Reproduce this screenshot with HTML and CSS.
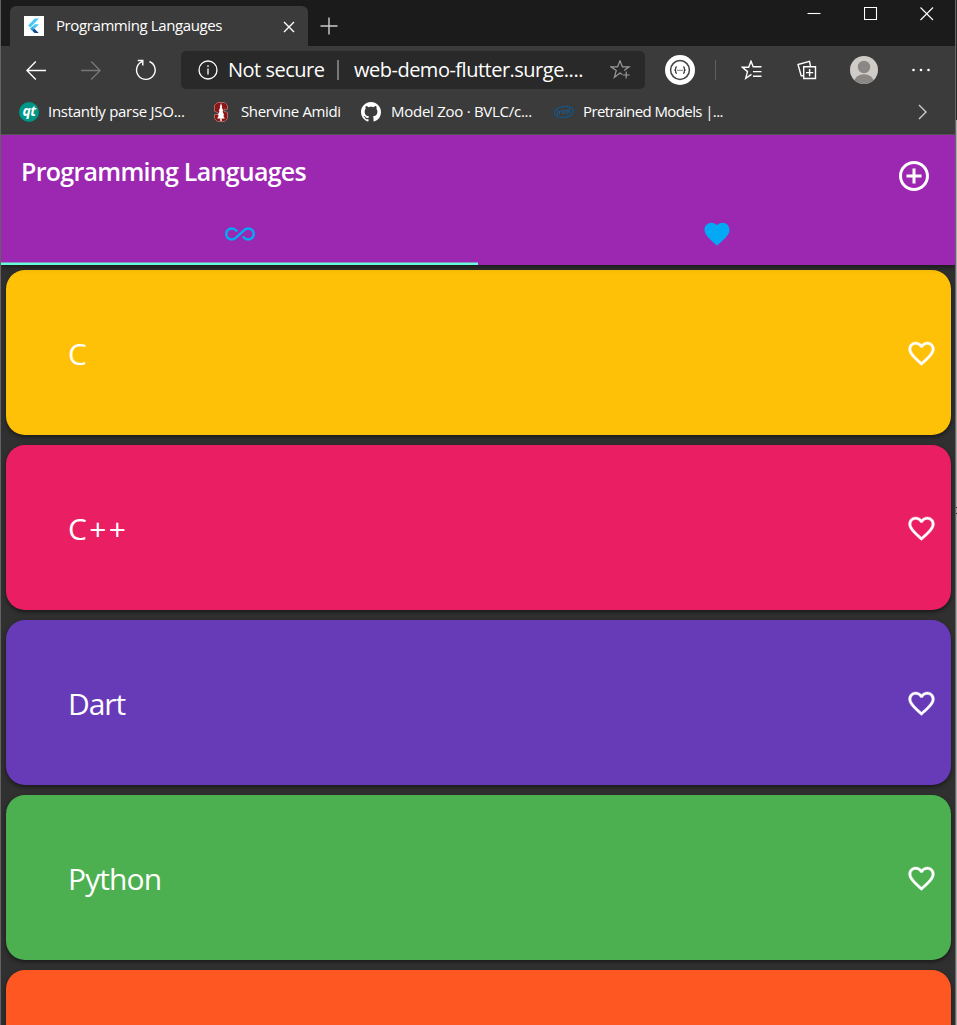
FILE: index.html
```html
<!DOCTYPE html>
<html lang="en">
<head>
<meta charset="utf-8">
<title>Programming Langauges</title>
<link rel="stylesheet" href="styles.css">
</head>
<body>
<svg class="defs" width="0" height="0">
  <symbol id="heart-outline" viewBox="0 0 24 24"><path d="M16.5 3c-1.74 0-3.41.81-4.5 2.09C10.91 3.81 9.24 3 7.5 3 4.42 3 2 5.42 2 8.5c0 3.78 3.4 6.86 8.55 11.54L12 21.35l1.45-1.32C18.6 15.36 22 12.28 22 8.5 22 5.42 19.58 3 16.5 3zm-4.4 15.55l-.1.1-.1-.1C7.14 14.24 4 11.39 4 8.5 4 6.5 5.5 5 7.5 5c1.54 0 3.04.99 3.57 2.36h1.87C13.46 5.99 14.96 5 16.5 5c2 0 3.5 1.5 3.5 3.5 0 2.89-3.14 5.74-7.9 10.05z"/></symbol>
</svg>
<div class="window">
  <div class="titlebar">
    <div class="tab">
      <svg class="favicon" width="20" height="20" viewBox="0 0 20 20"><path fill="#fff" d="M0 0h20v20H0z"/><path fill="#45c8f8" d="M10.800 2.500h4.200L6.200 11.500 4.100 9.400zM10.800 8.200h4.200l-4.500 4.500-2.200-2.100z"/><path fill="#2b9fe0" d="M8.300 10.600l2.100 2.100-2.100 2.200-2.200-2.200z"/><path fill="#0b4a94" d="M8.300 14.800l2.100-2.100 4.400 4.300h-4.200z"/></svg>
      <span class="tab-title">Programming Langauges</span>
      <svg class="tab-close" width="12" height="12" viewBox="0 0 12 12"><path d="M1 1l10 10M11 1L1 11"/></svg>
    </div>
    <svg class="new-tab" width="18" height="18" viewBox="0 0 18 18"><path d="M9 .5v17M.5 9h17"/></svg>
    <div class="controls">
      <svg width="14" height="14" viewBox="0 0 14 14"><path d="M.5 6.500h13"/></svg>
      <svg width="14" height="14" viewBox="0 0 14 14"><path d="M.5 .5h12v12H.5z"/></svg>
      <svg width="14" height="14" viewBox="0 0 14 14"><path d="M.5.5l12.500 12.500M13 .5L.5 13"/></svg>
    </div>
  </div>

  <div class="toolbar">
    <svg class="back" width="20" height="19" viewBox="0 0 20 19"><path d="M20 9.500H1M9.800.6L.9 9.500l8.900 8.900"/></svg>
    <svg class="forward" width="20" height="19" viewBox="0 0 20 19"><path d="M0 9.500h19M10.200.6l8.900 8.900-8.900 8.900"/></svg>
    <svg class="reload" width="22" height="22" viewBox="0 0 22 22"><path d="M14.500 2.500A9.300 9.300 0 1 1 7 2.600M2.800 1.500h5v5"/></svg>
    <div class="address">
      <svg class="info" width="20" height="20" viewBox="0 0 20 20"><circle cx="10" cy="10" r="9"/><path d="M10 8.500v6M10 5.300v1.600"/></svg>
      <span class="secure">Not secure</span>
      <span class="bar"></span>
      <span class="url">web-demo-flutter.surge....</span>
      <svg class="star" width="21" height="20" viewBox="0 0 21 20"><path d="M12.200 14.600L10 13l-5.700 4.500 2-7L.8 6.800h6.800L10 .8l2.400 6h6.700l-5 3.600M16.200 11.500v7M12.700 15h7"/></svg>
    </div>
    <svg class="extension" width="32" height="32" viewBox="0 0 32 32"><circle cx="16" cy="16" r="15" fill="#fff"/><circle cx="16" cy="16" r="9.400" fill="none" stroke="#444" stroke-width="1.500"/><path fill="none" stroke="#333" stroke-width="1.200" d="M13 12.800q-1.500 0-1.300 1.600t-1.500 1.600q1.700 0 1.500 1.600t1.300 1.600M19 12.800q1.500 0 1.300 1.600t1.500 1.600q-1.700 0-1.500 1.600t-1.300 1.600M13.500 16.300h1M15.500 16.300h1M17.500 16.300h1"/></svg>
    <span class="divider"></span>
    <svg class="favorites" width="22" height="20" viewBox="0 0 22 20"><path d="M20.500 6.800h-8.300L10 1.200 7.700 7.300H1.500l5 4.300-1.800 6.700 5.800-3.900M12 11.600h8.500M12 16.300h8.500"/></svg>
    <svg class="collections" width="20" height="20" viewBox="0 0 20 20"><path d="M6.700 6.700h11.800v11.800H6.700zM12.600 9v7.200M9 12.600h7.200M6.700 15.700H4.200L1 4.500l11.500-3.200 1 5.200"/></svg>
    <svg class="avatar" width="28" height="28" viewBox="0 0 28 28"><defs><clipPath id="disc"><circle cx="14" cy="14" r="14"/></clipPath></defs><g clip-path="url(#disc)"><path fill="#cfccc8" d="M0 0h28v28H0z"/><circle cx="14" cy="11" r="6.200" fill="#8b8784"/><ellipse cx="14" cy="26" rx="9.800" ry="7.800" fill="#8b8784"/></g></svg>
    <svg class="more" width="18" height="4" viewBox="0 0 18 4"><circle cx="1.500" cy="2" r="1.300"/><circle cx="9" cy="2" r="1.300"/><circle cx="16.500" cy="2" r="1.300"/></svg>
  </div>

  <div class="bookmarks">
    <span class="qt">qt</span><span class="mark m1">Instantly parse JSO...</span>
    <svg class="stanford" width="14" height="20" viewBox="0 0 14 20"><path fill="#8c1515" stroke="#bd7777" stroke-width=".8" d="M3.500.5h7l3 2.800v4H10v2l3.500 1v6.200l-3 3h-7l-3-3v-4H4v-1.800L.5 9.300v-6z"/><path fill="#fff" d="M7 1l1.200 4-.4.200 1.500 3.800-.8.200 1.700 4-1 .2 1.600 3.100H7.700v2.500H6.300v-2.500H3.200l1.600-3.100-1-.2 1.700-4-.8-.2L6.200 5.200 5.800 5z"/></svg>
    <span class="mark m2">Shervine Amidi</span>
    <svg class="github" width="20" height="20" viewBox="0 0 16 16"><path fill="#fff" d="M8 0C3.580 0 0 3.580 0 8c0 3.540 2.290 6.530 5.470 7.590.4.070.55-.17.55-.38 0-.19-.01-.82-.01-1.490-2.010.37-2.530-.49-2.690-.94-.09-.23-.48-.94-.82-1.130-.28-.15-.68-.52-.01-.53.63-.01 1.080.58 1.230.82.72 1.210 1.870.87 2.330.66.070-.52.28-.87.51-1.070-1.780-.2-3.640-.89-3.640-3.950 0-.87.31-1.590.82-2.150-.08-.2-.36-1.020.08-2.120 0 0 .67-.21 2.200.82.64-.18 1.320-.27 2-.27s1.360.09 2 .27c1.530-1.040 2.200-.82 2.200-.82.44 1.100.16 1.920.08 2.120.51.56.82 1.270.82 2.150 0 3.070-1.870 3.750-3.650 3.950.29.25.54.73.54 1.480 0 1.070-.01 1.930-.01 2.200 0 .21.15.46.55.38A8.010 8.010 0 0 0 16 8c0-4.420-3.580-8-8-8z"/></svg>
    <span class="mark m3">Model Zoo · BVLC/c...</span>
    <span class="intel">intel</span>
    <span class="mark m4">Pretrained Models |...</span>
    <svg class="chevron" width="9" height="16" viewBox="0 0 9 16"><path d="M1 1l7 7-7 7"/></svg>
  </div>

  <main class="app">
    <header class="appbar">
      <div class="heading">
        <h1>Programming Languages</h1>
        <svg class="add" width="36" height="36" viewBox="0 0 24 24"><path d="M13 7h-2v4H7v2h4v4h2v-4h4v-2h-4V7zm-1-5C6.480 2 2 6.480 2 12s4.480 10 10 10 10-4.480 10-10S17.520 2 12 2zm0 18c-4.410 0-8-3.590-8-8s3.590-8 8-8 8 3.590 8 8-3.590 8-8 8z"/></svg>
      </div>
      <nav class="tabs">
        <div class="view active"><svg width="30" height="30" viewBox="0 0 24 24"><path d="M18.600 6.620c-1.440 0-2.800.56-3.770 1.530L12 10.660 10.480 12h.01L7.800 14.390c-.64.64-1.490.99-2.400.99-1.870 0-3.390-1.510-3.390-3.380S3.530 8.620 5.400 8.620c.91 0 1.760.35 2.440 1.030l1.130 1 1.510-1.340L9.220 8.200C8.200 7.180 6.840 6.620 5.400 6.620 2.420 6.620 0 9.040 0 12s2.420 5.380 5.400 5.380c1.440 0 2.800-.56 3.770-1.530l2.830-2.500.01.010L13.520 12h-.01l2.690-2.390c.64-.64 1.490-.99 2.400-.99 1.870 0 3.390 1.510 3.390 3.380s-1.520 3.380-3.390 3.380c-.9 0-1.760-.35-2.440-1.030l-1.140-1.010-1.510 1.340 1.270 1.120c1.020 1.010 2.370 1.570 3.820 1.570 2.980 0 5.400-2.410 5.400-5.380s-2.420-5.370-5.400-5.370z"/></svg></div>
        <div class="view"><svg width="30" height="30" viewBox="0 0 24 24"><path d="M12 21.350l-1.450-1.320C5.400 15.360 2 12.280 2 8.500 2 5.420 4.420 3 7.500 3c1.740 0 3.410.81 4.500 2.090C13.090 3.810 14.760 3 16.500 3 19.580 3 22 5.420 22 8.500c0 3.780-3.400 6.860-8.550 11.540L12 21.350z"/></svg></div>
      </nav>
    </header>
    <section class="list">
      <article class="card amber"><span class="c1">C</span><svg class="heart"><use href="#heart-outline"/></svg></article>
      <article class="card pink"><span class="c2">C++</span><svg class="heart"><use href="#heart-outline"/></svg></article>
      <article class="card purple"><span class="c3">Dart</span><svg class="heart"><use href="#heart-outline"/></svg></article>
      <article class="card green"><span class="c4">Python</span><svg class="heart"><use href="#heart-outline"/></svg></article>
      <article class="card orange"></article>
    </section>
  </main>
</div>
</body>
</html>
```
FILE: styles.css
```css
* { box-sizing: border-box; }
body { margin: 0; height: 1025px; overflow: hidden; background: linear-gradient(#292929 120px, #aaa 120px, #aaa 507px, #223 507px, #223 508px, #aaa 508px, #aaa 513px, #223 513px, #223 514px, #aaa 514px); font-family: "Open Sans", "Noto Sans", sans-serif; color: #fff; }
svg { display: block; flex: none; fill: none; stroke: #fff; stroke-width: 1.4; }
.defs { position: absolute; }
.window { width: 956px; height: 1025px; border-left: 1px solid #626262; border-right: 1px solid #666; overflow: hidden; background: #303030; }
.titlebar { height: 46px; background: #1b1b1b; display: flex; padding: 6px 0 0 9px; }
.tab { width: 298px; height: 40px; border-radius: 6px 6px 0 0; background: #3b3b3b; display: flex; align-items: center; padding-left: 14px; }
.favicon, .extension, .avatar, .stanford, .github { stroke: none; }
.tab-title { margin: -2px 0 0 12px; width: 227px; font-size: 15px; letter-spacing: -.4px; white-space: nowrap; }
.tab-close { margin-top: 2px; }
.new-tab { margin: 11px 0 0 12px; stroke: #ccc; }
.controls { display: flex; gap: 42.5px; margin-left: auto; padding-right: 21px; }
.controls svg { stroke-width: 1.1; margin-top: 1px; }
.toolbar { height: 48px; background: #3b3b3b; display: flex; align-items: center; padding-left: 25px; }
.forward { margin-left: 35px; stroke: #777; }
.reload { margin-left: 34px; }
.address { width: 464px; height: 38px; margin-left: 24px; border-radius: 5px; background: #292929; display: flex; align-items: center; padding-left: 17px; font-size: 20px; white-space: nowrap; }
.info { stroke-width: 1.3; }
.secure { width: 97px; margin: -1px 0 0 10px; letter-spacing: -.5px; }
.bar { width: 2px; height: 20px; margin-left: 12px; background: #777; }
.url { width: 230px; margin: -1px 0 0 15px; letter-spacing: -.5px; }
.star { margin-left: 26px; stroke: #999; stroke-width: 1.2; }
.extension { margin-left: 19px; }
.divider { width: 1px; height: 20px; margin-left: 19px; background: #606060; }
.favorites { margin-left: 25px; }
.collections { margin-left: 34px; }
.avatar { margin-left: 33px; }
.more { margin-left: 34px; fill: #fff; stroke: none; }
.bookmarks { height: 41px; background: #3b3b3b; border-bottom: 1px solid #5b5b5b; display: flex; align-items: center; padding: 0 0 5px 18px; font-size: 15px; white-space: nowrap; }
.qt { width: 20px; height: 20px; border-radius: 50%; background: #009688; font: italic bold 14px/18px "Open Sans", sans-serif; text-align: center; letter-spacing: -.5px; }
.mark { margin-top: -2px; }
.m1 { margin-left: 9px; width: 166px; letter-spacing: -.28px; }
.m2 { margin-left: 13px; width: 120px; letter-spacing: -.37px; }
.m3 { margin-left: 10px; width: 163px; letter-spacing: -.27px; }
.m4 { margin-left: 9px; width: 335px; letter-spacing: -.59px; }
.intel { width: 20px; height: 12px; border: 1px solid #075b9d; border-radius: 50%; color: #0868b0; font-size: 7px; line-height: 9px; text-align: center; transform: rotate(-8deg); }
.chevron { stroke: #ccc; }
.app { height: 890px; }
.appbar { position: relative; height: 130px; background: #9c27b0; box-shadow: 0 2px 5px rgba(0,0,0,.5); }
.heading { height: 80px; display: flex; align-items: center; justify-content: space-between; padding: 1px 23.5px 0 20px; }
h1 { margin: -10px 0 0; font-size: 25px; line-height: 34px; font-weight: 600; letter-spacing: -.72px; }
.add { fill: #fff; stroke: none; }
.tabs { height: 50px; display: flex; }
.view { width: 477.5px; height: 50px; display: flex; justify-content: center; padding-top: 4px; }
.view.active { background: linear-gradient(transparent 47px, #8a90c5 47px, #8a90c5 48px, #64ffda 48px); }
.view svg { fill: #03a9f4; stroke: none; }
.list { padding: 5px 4px 5px 5px; display: grid; gap: 10px; }
.card { height: 165px; border-radius: 19px; display: flex; align-items: center; justify-content: space-between; padding: 2px 14.5px 0 62px; font-size: 30px; box-shadow: 0 2px 4px rgba(0,0,0,.5); }
.heart { width: 31px; height: 31px; fill: #fff; stroke: #fff; stroke-width: .25; margin-top: -1px; }
.c2 { letter-spacing: 2.4px; }
.c3 { letter-spacing: -1.1px; }
.c4 { letter-spacing: -.9px; }
.amber { background: #ffc107; }
.pink { background: #e91e63; }
.purple { background: #673ab7; }
.green { background: #4caf50; }
.orange { background: #ff5722; }
```
